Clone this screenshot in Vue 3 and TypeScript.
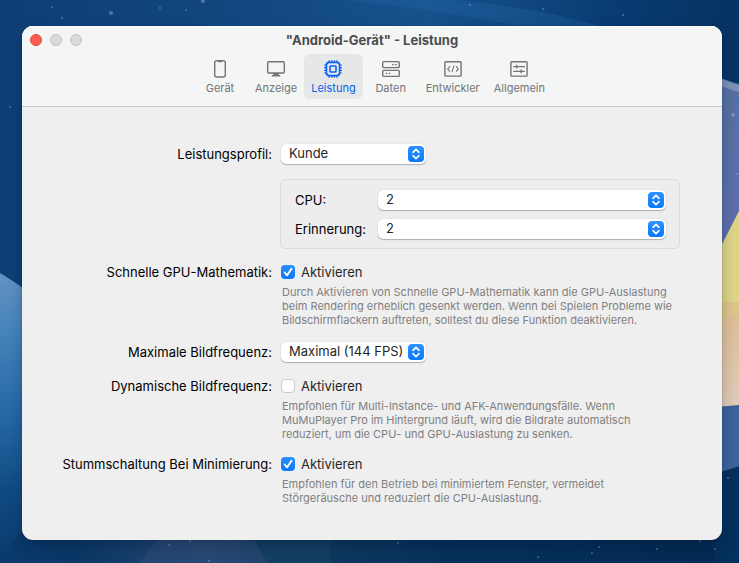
<script setup lang="ts">
import { ref } from 'vue'

interface Tab {
  id: string
  label: string
}

const tabs: Tab[] = [
  { id: 'device', label: 'Gerät' },
  { id: 'display', label: 'Anzeige' },
  { id: 'performance', label: 'Leistung' },
  { id: 'data', label: 'Daten' },
  { id: 'developer', label: 'Entwickler' },
  { id: 'general', label: 'Allgemein' },
]

const activeTab = ref<string>('performance')
const profile = ref<string>('Kunde')
const cpu = ref<string>('2')
const memory = ref<string>('2')
const frameRate = ref<string>('Maximal (144 FPS)')
const fastMath = ref<boolean>(true)
const dynamicRate = ref<boolean>(false)
const muteMinimized = ref<boolean>(true)

const stars: [number, number, number][] = [
  [111, 13, 2], [160, 8, 1], [186, 10, 1], [203, 1, 2], [62, 18, 1], [52, 7, 1],
  [623, 15, 1], [543, 9, 1], [470, 5, 1], [10, 107, 1], [733, 115, 2], [737, 174, 1],
  [169, 545, 1], [209, 561, 1], [190, 541, 1], [398, 543, 1], [538, 557, 1],
  [592, 553, 1], [599, 547, 1], [657, 549, 1], [700, 541, 1], [715, 549, 1], [728, 478, 1],
]
</script>

<template>
  <div class="desktop">
    <svg class="wallpaper" viewBox="0 0 739 563" preserveAspectRatio="none" aria-hidden="true">
      <defs>
        <linearGradient id="sky" x1="0" y1="0" x2="1" y2="0">
          <stop offset="0" stop-color="#0d3f76" />
          <stop offset="0.3" stop-color="#12467f" />
          <stop offset="0.58" stop-color="#17528d" />
          <stop offset="0.82" stop-color="#093c74" />
          <stop offset="1" stop-color="#073361" />
        </linearGradient>
        <linearGradient id="ridge" x1="0" y1="0" x2="0" y2="1">
          <stop offset="0" stop-color="#6493c2" />
          <stop offset="0.2" stop-color="#4583bb" />
          <stop offset="0.5" stop-color="#2467a3" />
          <stop offset="0.75" stop-color="#104a83" />
          <stop offset="1" stop-color="#093a6c" />
        </linearGradient>
        <linearGradient id="violet" x1="0" y1="0" x2="0" y2="1">
          <stop offset="0" stop-color="#54719f" />
          <stop offset="1" stop-color="#5e6dac" />
        </linearGradient>
        <linearGradient id="floor" x1="0" y1="0" x2="1" y2="0">
          <stop offset="0" stop-color="#0a3a6c" />
          <stop offset="0.1" stop-color="#0a3766" />
          <stop offset="0.28" stop-color="#24476f" />
          <stop offset="0.36" stop-color="#123c60" />
          <stop offset="0.6" stop-color="#06315a" />
          <stop offset="1" stop-color="#032a52" />
        </linearGradient>
        <linearGradient id="sand" x1="0" y1="0" x2="0" y2="1">
          <stop offset="0" stop-color="#ddbb8f" />
          <stop offset="1" stop-color="#decbb9" />
        </linearGradient>
      </defs>
      <rect width="739" height="563" fill="url(#sky)" />
      <path d="M340 0Q430 8 520 26H600Q520 4 450 0Z" fill="#2264a0" opacity="0.35" />
      <path d="M0 273Q12 280 30 293V563H0Z" fill="url(#ridge)" />
      <path d="M22 530H739V563H0V561Z" fill="url(#floor)" />
      <path d="M160 534H251L268 563H140Z" fill="#2b4b76" opacity="0.6" />
      <path d="M251 534H330V563H268Z" fill="#123f62" />
      <path d="M715 76Q729 81 739 84V250H715Z" fill="url(#violet)" />
      <path d="M715 77Q729 82 739 85V92Q726 88 715 84Z" fill="#7c92b8" />
      <path d="M715 258L739 211V310H715Z" fill="#ddd489" />
      <path d="M715 302H739V408H715Z" fill="url(#sand)" />
      <path d="M715 302H739V314L715 320Z" fill="#dcc48b" />
      <path d="M715 407Q728 406 739 405V470L715 474Z" fill="#3c6299" />
      <path d="M715 473Q729 470 739 466V563H715Z" fill="#04305c" />
      <circle v-for="(s, i) in stars" :key="i" :cx="s[0]" :cy="s[1]" :r="s[2]" fill="#a9c4e2" opacity="0.4" />
    </svg>

    <section class="window" aria-labelledby="window-title">
      <header class="toolbar">
        <div class="titlebar">
          <div class="lights">
            <button type="button" class="light close" aria-label="Schließen"></button>
            <button type="button" class="light" aria-label="Minimieren"></button>
            <button type="button" class="light" aria-label="Vergrößern"></button>
          </div>
          <h1 id="window-title">"Android-Gerät" - Leistung</h1>
        </div>
        <nav class="tabs">
          <button
            v-for="tab in tabs"
            :key="tab.id"
            type="button"
            class="tab"
            :class="{ active: activeTab === tab.id }"
            @click="activeTab = tab.id"
          >
            <svg class="tab-icon" viewBox="0 0 20 20" aria-hidden="true">
              <g v-if="tab.id === 'device'">
                <rect x="4.7" y="1.7" width="10.6" height="16.3" rx="2" />
                <path d="M8 2.6h4" />
              </g>
              <g v-else-if="tab.id === 'display'">
                <rect x="1.7" y="2.7" width="16.6" height="11.3" rx="1" />
                <path d="M8 14.8h4v1.4H8zM5.8 16.8h8.4" />
              </g>
              <g v-else-if="tab.id === 'performance'">
                <rect x="3.4" y="3.4" width="13.2" height="13.2" rx="2.8" stroke-width="1.7" />
                <rect x="7" y="7" width="6" height="6" rx="0.8" stroke-width="1.6" />
                <path
                  d="M6 1.2v2M8.7 1.2v2M11.3 1.2v2M14 1.2v2M6 16.8v2M8.7 16.8v2M11.3 16.8v2M14 16.8v2M1.2 6h2M1.2 8.7h2M1.2 11.3h2M1.2 14h2M16.8 6h2M16.8 8.7h2M16.8 11.3h2M16.8 14h2"
                  stroke-width="1.2"
                />
              </g>
              <g v-else-if="tab.id === 'data'">
                <rect x="1.7" y="2.6" width="16.6" height="6" rx="1.2" />
                <rect x="1.7" y="11.4" width="16.6" height="6" rx="1.2" />
                <path d="M11 5.6h1.6M14 5.6h1.6M4.7 14.4h1.6M7.7 14.4h1.6" />
              </g>
              <g v-else-if="tab.id === 'developer'">
                <rect x="1.9" y="2.7" width="16.2" height="14.4" rx="0.8" />
                <path d="M7 7.2L4.7 9.9 7 12.6M13 7.2l2.3 2.7-2.3 2.7M11 6.6L9 13.2" stroke-width="1.1" />
              </g>
              <g v-else>
                <rect x="1.9" y="2.7" width="16.2" height="14.4" rx="0.8" />
                <path d="M4.2 7.6h11.6M4.2 12.4h11.6M7.6 5.7v3.8M12.2 10.5v3.8" />
              </g>
            </svg>
            <span>{{ tab.label }}</span>
          </button>
        </nav>
      </header>

      <form class="settings" @submit.prevent>
        <label class="name select-name" for="profile">Leistungsprofil:</label>
        <div class="picker compact">
          <select id="profile" v-model="profile">
            <option>Kunde</option>
          </select>
          <svg class="stepper" viewBox="0 0 16 16" aria-hidden="true">
            <path d="M5 6.3L8 3.4l3 2.9M5 9.7l3 2.9 3-2.9" />
          </svg>
        </div>

        <div class="group">
          <label for="cpu">CPU:</label>
          <div class="picker">
            <select id="cpu" v-model="cpu">
              <option>2</option>
            </select>
            <svg class="stepper" viewBox="0 0 16 16" aria-hidden="true">
              <path d="M5 6.3L8 3.4l3 2.9M5 9.7l3 2.9 3-2.9" />
            </svg>
          </div>
          <label for="memory">Erinnerung:</label>
          <div class="picker">
            <select id="memory" v-model="memory">
              <option>2</option>
            </select>
            <svg class="stepper" viewBox="0 0 16 16" aria-hidden="true">
              <path d="M5 6.3L8 3.4l3 2.9M5 9.7l3 2.9 3-2.9" />
            </svg>
          </div>
        </div>

        <span class="name">Schnelle GPU-Mathematik:</span>
        <div class="option">
          <label class="check">
            <input v-model="fastMath" type="checkbox" />
            <svg viewBox="0 0 14 14" aria-hidden="true"><path d="M3.6 7.4l2.5 2.9 4.4-6.6" /></svg>
            <span>Aktivieren</span>
          </label>
          <p>
            Durch Aktivieren von Schnelle GPU-Mathematik kann die GPU-Auslastung<br />
            beim Rendering erheblich gesenkt werden. Wenn bei Spielen Probleme wie<br />
            Bildschirmflackern auftreten, solltest du diese Funktion deaktivieren.
          </p>
        </div>

        <label class="name select-name" for="rate">Maximale Bildfrequenz:</label>
        <div class="picker compact">
          <select id="rate" v-model="frameRate">
            <option>Maximal (144 FPS)</option>
          </select>
          <svg class="stepper" viewBox="0 0 16 16" aria-hidden="true">
            <path d="M5 6.3L8 3.4l3 2.9M5 9.7l3 2.9 3-2.9" />
          </svg>
        </div>

        <span class="name">Dynamische Bildfrequenz:</span>
        <div class="option">
          <label class="check">
            <input v-model="dynamicRate" type="checkbox" />
            <svg viewBox="0 0 14 14" aria-hidden="true"><path d="M3.6 7.4l2.5 2.9 4.4-6.6" /></svg>
            <span>Aktivieren</span>
          </label>
          <p>
            Empfohlen für Multi-Instance- und AFK-Anwendungsfälle. Wenn<br />
            MuMuPlayer Pro im Hintergrund läuft, wird die Bildrate automatisch<br />
            reduziert, um die CPU- und GPU-Auslastung zu senken.
          </p>
        </div>

        <span class="name">Stummschaltung Bei Minimierung:</span>
        <div class="option">
          <label class="check">
            <input v-model="muteMinimized" type="checkbox" />
            <svg viewBox="0 0 14 14" aria-hidden="true"><path d="M3.6 7.4l2.5 2.9 4.4-6.6" /></svg>
            <span>Aktivieren</span>
          </label>
          <p>
            Empfohlen für den Betrieb bei minimiertem Fenster, vermeidet<br />
            Störgeräusche und reduziert die CPU-Auslastung.
          </p>
        </div>
      </form>
    </section>
  </div>
</template>

<style>
body {
  margin: 0;
}
</style>

<style scoped>
.desktop {
  position: relative;
  box-sizing: border-box;
  min-height: 100vh;
  padding: 26px 17px 23px 22px;
  overflow: hidden;
  background: #0c3c70;
  font-family: Inter, 'Liberation Sans', sans-serif;
  font-size: 13px;
  color: #000;
}

.wallpaper {
  position: absolute;
  inset: 0;
  width: 100%;
  height: 100%;
}

.window {
  position: relative;
  overflow: hidden;
  border-radius: 11px;
  background: #efeff0;
  box-shadow: 0 0 1px rgba(0, 0, 0, 0.6), 0 6px 14px rgba(0, 12, 40, 0.25);
}

.toolbar {
  padding-bottom: 7px;
  border-bottom: 1px solid #c5c7c9;
  background: #f4f6f6;
  box-shadow: inset 0 1px 0 #fff;
}

.titlebar {
  display: grid;
  grid-template-columns: 1fr auto 1fr;
  align-items: center;
  height: 28px;
  padding: 0 8px;
}

.lights {
  display: flex;
  gap: 8px;
}

.light {
  width: 12px;
  height: 12px;
  padding: 0;
  border: 1px solid #c2c3c3;
  border-radius: 50%;
  background: #d9dada;
}

.close {
  border-color: #e5463f;
  background: #ff5c54;
}

h1 {
  margin: 0;
  font-size: 13px;
  line-height: 16px;
  font-weight: 700;
  color: #4b4c4c;
  white-space: nowrap;
}

.tabs {
  display: flex;
  justify-content: center;
}

.tab {
  display: flex;
  flex-direction: column;
  align-items: center;
  gap: 2px;
  box-sizing: border-box;
  min-width: 56px;
  height: 45px;
  padding: 5px 7px 0;
  border: 0;
  border-radius: 6px;
  background: none;
  font-family: inherit;
  font-size: 11px;
  line-height: 14px;
  color: #737475;
}

.tab.active {
  background: #e6e8e8;
  color: #0a60f0;
}

.tab-icon {
  width: 20px;
  height: 20px;
  fill: none;
  stroke: currentColor;
  stroke-width: 1.4;
}

.settings {
  display: grid;
  grid-template-columns: 208px minmax(0, 1fr);
  column-gap: 8px;
  row-gap: 14px;
  padding: 36px 42px 35px;
}

.name {
  justify-self: end;
  line-height: 18px;
  white-space: nowrap;
}

.select-name {
  line-height: 22px;
}

.picker {
  position: relative;
  display: flex;
}

.compact {
  justify-self: start;
  width: 145px;
  margin: 1px;
}

select {
  flex: 1;
  min-width: 0;
  height: 20px;
  padding: 0 20px 2px 8px;
  appearance: none;
  border: 0;
  border-radius: 5px;
  background: #fff;
  box-shadow: 0 0 1px rgba(0, 0, 0, 0.25), 0 1px 1px rgba(0, 0, 0, 0.25);
  font-family: inherit;
  font-size: 13px;
  line-height: 18px;
  color: #262626;
}

.stepper {
  position: absolute;
  top: 2px;
  right: 2px;
  width: 16px;
  height: 16px;
  border-radius: 4px;
  background: linear-gradient(#2f92ff, #0a78fb);
  fill: none;
  stroke: #fff;
  stroke-width: 1.6;
  stroke-linecap: round;
  stroke-linejoin: round;
  pointer-events: none;
}

.group {
  grid-column: 2;
  display: grid;
  grid-template-columns: 83px minmax(0, 1fr);
  align-items: center;
  row-gap: 9px;
  padding: 10px 13px 9px 14px;
  border: 1px solid #dcdcde;
  border-radius: 5px;
  background: #ededee;
}

.group label {
  line-height: 20px;
}

.check {
  display: grid;
  grid-template-columns: 14px auto;
  justify-content: start;
  align-items: center;
  column-gap: 6px;
  padding-left: 1px;
  line-height: 18px;
  color: #262626;
}

.check input {
  grid-area: 1 / 1;
  box-sizing: border-box;
  width: 14px;
  height: 14px;
  margin: 0;
  appearance: none;
  border: 1px solid #cbcbcc;
  border-radius: 4px;
  background: #fff;
}

.check input:checked {
  border: 0;
  background: linear-gradient(#2b90ff, #0a78fb);
}

.check svg {
  grid-area: 1 / 1;
  z-index: 1;
  width: 14px;
  height: 14px;
  fill: none;
  stroke: #fff;
  stroke-width: 1.9;
  stroke-linecap: round;
  stroke-linejoin: round;
  pointer-events: none;
}

.option p {
  margin: 4px 0 0;
  padding-left: 2px;
  font-size: 11px;
  line-height: 14px;
  color: #808081;
  white-space: nowrap;
}
</style>
